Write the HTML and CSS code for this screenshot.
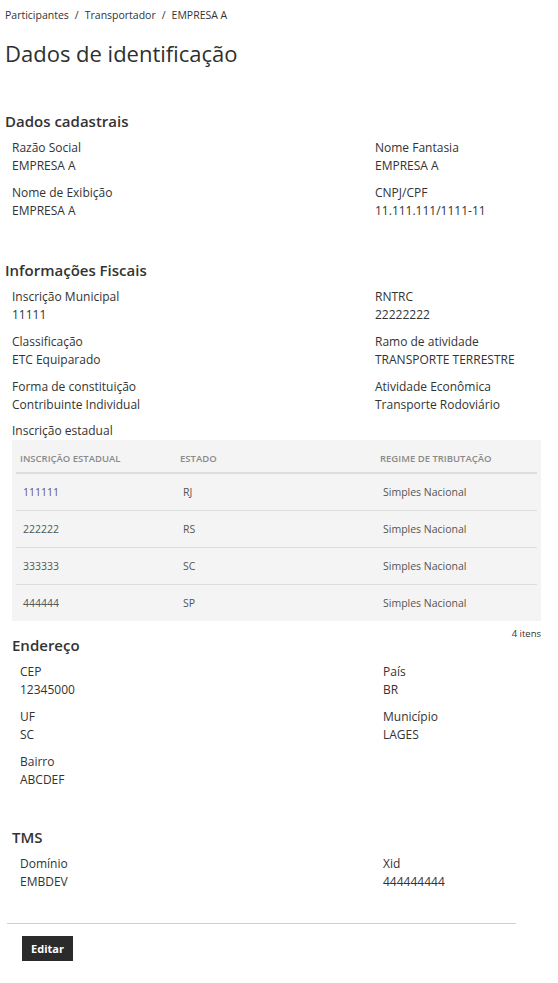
FILE: index.html
```html
<!DOCTYPE html>
<html lang="pt-BR">
<head>
<meta charset="utf-8">
<title>Dados de identificação</title>
<link rel="stylesheet" href="styles.css">
</head>
<body>
<div class="page">
  <nav class="breadcrumb">
    <span>Participantes</span><span class="sep">/</span><span>Transportador</span><span class="sep">/</span><span>EMPRESA A</span>
  </nav>
  <h1 class="title">Dados de identificação</h1>

  <section class="section">
    <h2 class="section-title">Dados cadastrais</h2>
    <div class="fields">
      <div class="field"><div class="label">Razão Social</div><div class="value">EMPRESA A</div></div>
      <div class="field"><div class="label">Nome Fantasia</div><div class="value">EMPRESA A</div></div>
      <div class="field"><div class="label">Nome de Exibição</div><div class="value">EMPRESA A</div></div>
      <div class="field"><div class="label">CNPJ/CPF</div><div class="value">11.111.111/1111-11</div></div>
    </div>
  </section>

  <section class="section">
    <h2 class="section-title">Informações Fiscais</h2>
    <div class="fields">
      <div class="field"><div class="label">Inscrição Municipal</div><div class="value">11111</div></div>
      <div class="field"><div class="label">RNTRC</div><div class="value">22222222</div></div>
      <div class="field"><div class="label">Classificação</div><div class="value">ETC Equiparado</div></div>
      <div class="field"><div class="label">Ramo de atividade</div><div class="value">TRANSPORTE TERRESTRE</div></div>
      <div class="field"><div class="label">Forma de constituição</div><div class="value">Contribuinte Individual</div></div>
      <div class="field"><div class="label">Atividade Econômica</div><div class="value">Transporte Rodoviário</div></div>
    </div>
    <div class="sublabel">Inscrição estadual</div>
    <div class="table-wrap">
      <table class="grid">
        <thead>
          <tr><th class="c1">Inscrição Estadual</th><th class="c2">Estado</th><th class="c3">Regime de tributação</th></tr>
        </thead>
        <tbody>
          <tr><td class="num">111111</td><td>RJ</td><td>Simples Nacional</td></tr>
          <tr><td>222222</td><td>RS</td><td>Simples Nacional</td></tr>
          <tr><td>333333</td><td>SC</td><td>Simples Nacional</td></tr>
          <tr><td>444444</td><td>SP</td><td>Simples Nacional</td></tr>
        </tbody>
      </table>
    </div>
    <div class="table-foot">4 itens</div>

    <div class="subsection">
      <h2 class="section-title">Endereço</h2>
      <div class="fields">
        <div class="field"><div class="label">CEP</div><div class="value">12345000</div></div>
        <div class="field"><div class="label">País</div><div class="value">BR</div></div>
        <div class="field"><div class="label">UF</div><div class="value">SC</div></div>
        <div class="field"><div class="label">Município</div><div class="value">LAGES</div></div>
        <div class="field"><div class="label">Bairro</div><div class="value">ABCDEF</div></div>
      </div>
    </div>

    <div class="subsection tms">
      <h2 class="section-title">TMS</h2>
      <div class="fields">
        <div class="field"><div class="label">Domínio</div><div class="value">EMBDEV</div></div>
        <div class="field"><div class="label">Xid</div><div class="value">444444444</div></div>
      </div>
    </div>
  </section>

  <hr class="divider">
  <div class="actions">
    <button class="btn" type="button">Editar</button>
  </div>
</div>
</body>
</html>
```

FILE: styles.css
```css
html, body {
  margin: 0;
  padding: 0;
  background: #fff;
}
body {
  font-family: "Open Sans", "Noto Sans", sans-serif;
  color: #333;
}
.page {
  padding: 0 5px;
}
.breadcrumb {
  padding-top: 7px;
  font-size: 10.5px;
  line-height: 16px;
  color: #333;
}
.breadcrumb .sep {
  margin: 0 6px;
}
.title {
  margin: 15px 0 0;
  font-size: 22px;
  line-height: 30px;
  font-weight: 400;
  color: #2f2f2f;
}
.section {
  margin-top: 42px;
}
.section + .section {
  margin-top: 39px;
}
.section-title {
  margin: 0;
  font-size: 15px;
  line-height: 22px;
  font-weight: 600;
  color: #333;
}
.fields {
  margin-top: 7px;
  padding-left: 7px;
  display: grid;
  grid-template-columns: 363px 1fr;
  row-gap: 9px;
}
.label, .value, .sublabel {
  font-size: 12px;
  line-height: 18px;
  color: #333;
  white-space: nowrap;
}
.sublabel {
  margin-top: 8px;
  padding-left: 7px;
}
.table-wrap {
  margin-left: 7px;
  background: #f4f4f4;
  padding: 4px 4px 0;
  width: 521px;
}
.grid {
  width: 100%;
  border-collapse: collapse;
  table-layout: fixed;
}
.grid th {
  text-align: left;
  font-size: 9.5px;
  font-weight: 600;
  color: #8a8a8a;
  text-transform: uppercase;
  height: 28px;
  padding: 0 4px;
  border-bottom: 2px solid #dddddd;
  vertical-align: middle;
}
.grid th.c1 { width: 152px; }
.grid th.c2 { width: 192px; }
.grid td {
  font-size: 10.5px;
  color: #555;
  height: 36px;
  padding: 0 7px;
  border-bottom: 1px solid #dddddd;
  vertical-align: middle;
}
.grid tbody tr:last-child td {
  border-bottom: none;
}
.grid td.num {
  color: #5e5470;
}
.table-foot {
  box-sizing: border-box;
  height: 13px;
  padding-top: 6px;
  width: 536px;
  text-align: right;
  font-size: 9.5px;
  line-height: 14px;
  color: #333;
}
.subsection {
  padding-left: 7px;
}
.subsection .fields {
  padding-left: 8px;
}
.tms {
  margin-top: 37px;
}
.divider {
  margin: 32px 0 0 2px;
  width: 509px;
  border: none;
  border-top: 1px solid #cfcfcf;
  height: 0;
}
.actions {
  padding: 12px 0 0 17px;
}
.btn {
  display: block;
  width: 51px;
  height: 25px;
  padding: 0;
  border: none;
  background: #2b2b2b;
  color: #fff;
  font-family: "Open Sans", "Noto Sans", sans-serif;
  font-size: 11px;
  font-weight: 700;
  cursor: pointer;
}
```
